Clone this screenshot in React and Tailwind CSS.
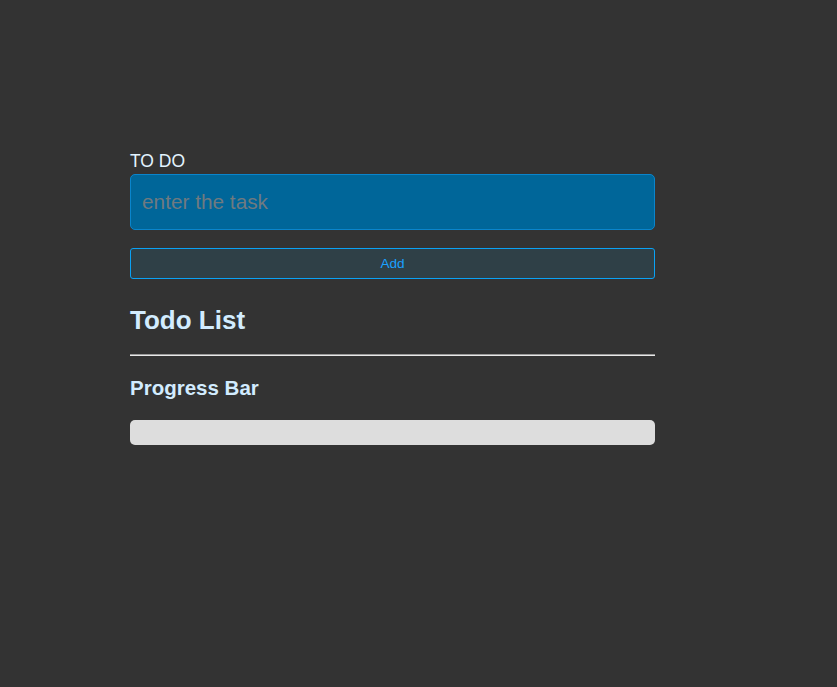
export default function App() {
  return (
    <div className="min-h-[687px] w-full bg-[#333333] pt-[151px] pl-[130px]" style={{ fontFamily: '"Liberation Sans", Arial, sans-serif' }}>
      <div className="w-[525px] flex flex-col">
        <label className="text-[17.5px] leading-[20px] text-[#e3f4ff]">TO DO</label>
        <input
          type="text"
          placeholder="enter the task"
          className="mt-[3px] h-[56px] w-full rounded-[5px] border border-[#0a85cc] bg-[#006699] px-[11px] text-[20.8px] text-white placeholder:text-[#6f7a80] outline-none"
        />
        <button className="mt-[18px] h-[31px] w-full rounded-[3px] border border-[#0aa2f5] bg-[#2f4047] pt-[2px] text-[13.6px] text-[#1aa0ff]">
          Add
        </button>
        <h2 className="mt-[26px] text-[26px] leading-[30px] font-bold text-[#d2ecff]">Todo List</h2>
        <div className="mt-[19px] h-[2px] w-full border-t border-[#9a9a9a] bg-[#e8e8e8]"></div>
        <h3 className="mt-[20px] text-[20.5px] leading-[24px] font-bold text-[#d2ecff]">Progress Bar</h3>
        <div className="mt-[20px] h-[25px] w-full rounded-[5px] bg-[#dddddd]"></div>
      </div>
    </div>
  );
}
